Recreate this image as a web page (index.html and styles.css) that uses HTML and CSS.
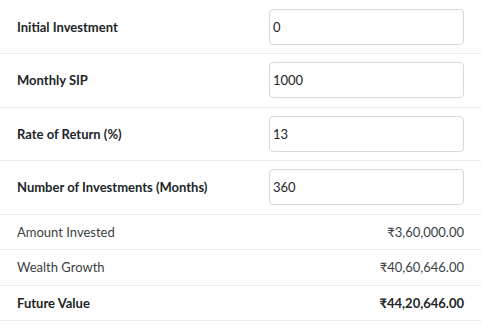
FILE: index.html
```html
<!DOCTYPE html>
<html lang="en">
<head>
    <meta charset="UTF-8">
    <meta name="viewport" content="width=device-width, initial-scale=1.0">
    <title>SIP Calculator</title>
    <link rel="stylesheet" href="styles.css">
</head>
<body>
    <!-- SIP calculator table -->
    <table class="calc">
        <tr class="input-row">
            <th><label for="initial">Initial Investment</label></th>
            <td><input type="text" id="initial" value="0"></td>
        </tr>
        <tr class="input-row">
            <th><label for="monthly">Monthly SIP</label></th>
            <td><input type="text" id="monthly" value="1000"></td>
        </tr>
        <tr class="input-row">
            <th><label for="rate">Rate of Return (%)</label></th>
            <td><input type="text" id="rate" value="13"></td>
        </tr>
        <tr class="input-row">
            <th><label for="months">Number of Investments (Months)</label></th>
            <td><input type="text" id="months" value="360"></td>
        </tr>
        <tr class="result-row">
            <td>Amount Invested</td>
            <td class="amount">₹3,60,000.00</td>
        </tr>
        <tr class="result-row">
            <td>Wealth Growth</td>
            <td class="amount">₹40,60,646.00</td>
        </tr>
        <tr class="result-row total">
            <td>Future Value</td>
            <td class="amount">₹44,20,646.00</td>
        </tr>
    </table>
</body>
</html>
```

FILE: styles.css
```css
/* Basic Reset */
* {
    margin: 0;
    padding: 0;
    box-sizing: border-box;
}

body {
    font-family: Lato, "Open Sans", Arial, sans-serif;
    font-size: 13px;
    color: #212529;
    background-color: #fff;
}

/* Calculator table */
.calc {
    width: 100%;
    border-collapse: collapse;
}

.calc th,
.calc td {
    text-align: left;
    vertical-align: middle;
    border-bottom: 1px solid #eceeef;
    padding: 8px 17px;
}

.calc th {
    width: 252px;
    font-weight: 700;
}

.input-row th,
.input-row td {
    height: 53.5px;
}

.input-row input {
    display: block;
    width: 100%;
    height: 36px;
    padding: 0 3px;
    font-family: inherit;
    font-size: 13px;
    color: #212529;
    border: 1px solid #d6d9dc;
    border-radius: 4px;
}

.result-row td {
    height: 35.5px;
    color: #3a3f44;
}

.result-row .amount {
    text-align: right;
}

.result-row.total td {
    font-weight: 700;
    color: #212529;
}
```
